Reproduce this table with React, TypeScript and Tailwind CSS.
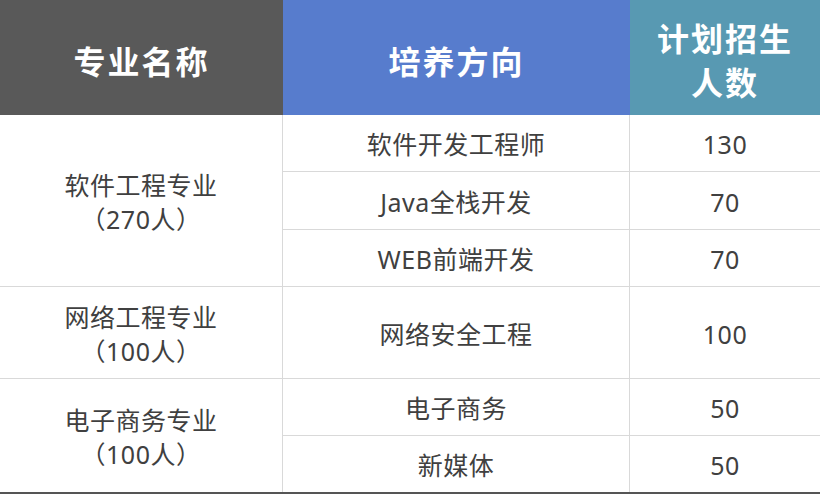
import React from "react";

const font = { fontFamily: '"Noto Sans", "Noto Sans CJK SC", sans-serif' };

export default function App() {
  const cell = "flex items-center justify-center border-b border-[#d9d9d9] text-[25px] tracking-[0.5px] text-[#404040]";
  const one = `${cell} pt-[4px]`;
  return (
    <div style={font} className="w-[820px] h-[494px] bg-white overflow-hidden">
      <div className="grid grid-cols-[283px_347px_190px] grid-rows-[115px_57px_58px_57px_92px_57px_56px] border-b-2 border-[#555555]">
        <div className="flex items-center justify-center bg-[#595959] text-white font-bold text-[32px] tracking-[2px] pt-[8px]">专业名称</div>
        <div className="flex items-center justify-center bg-[#577ccd] text-white font-bold text-[32px] tracking-[2px] pt-[8px]">培养方向</div>
        <div className="flex flex-col items-center justify-center bg-[#5899b2] text-white font-bold text-[32px] tracking-[2px] leading-[44px] pt-[6px]">
          <span>计划招生</span>
          <span>人数</span>
        </div>

        <div className={`${cell} row-span-3 border-r flex-col leading-[34px] pt-[2px]`}>
          <span>软件工程专业</span>
          <span>（270人）</span>
        </div>
        <div className={`${one} border-r`}>软件开发工程师</div>
        <div className={one}>130</div>
        <div className={`${one} border-r`}>Java全栈开发</div>
        <div className={one}>70</div>
        <div className={`${one} border-r`}>WEB前端开发</div>
        <div className={one}>70</div>

        <div className={`${cell} border-r flex-col leading-[34px] pt-[2px]`}>
          <span>网络工程专业</span>
          <span>（100人）</span>
        </div>
        <div className={`${one} border-r`}>网络安全工程</div>
        <div className={one}>100</div>

        <div className={`${cell} row-span-2 border-r border-b-0 flex-col leading-[34px] pt-[2px]`}>
          <span>电子商务专业</span>
          <span>（100人）</span>
        </div>
        <div className={`${one} border-r`}>电子商务</div>
        <div className={one}>50</div>
        <div className={`${one} border-r border-b-0`}>新媒体</div>
        <div className={`${one} border-b-0`}>50</div>
      </div>
    </div>
  );
}
